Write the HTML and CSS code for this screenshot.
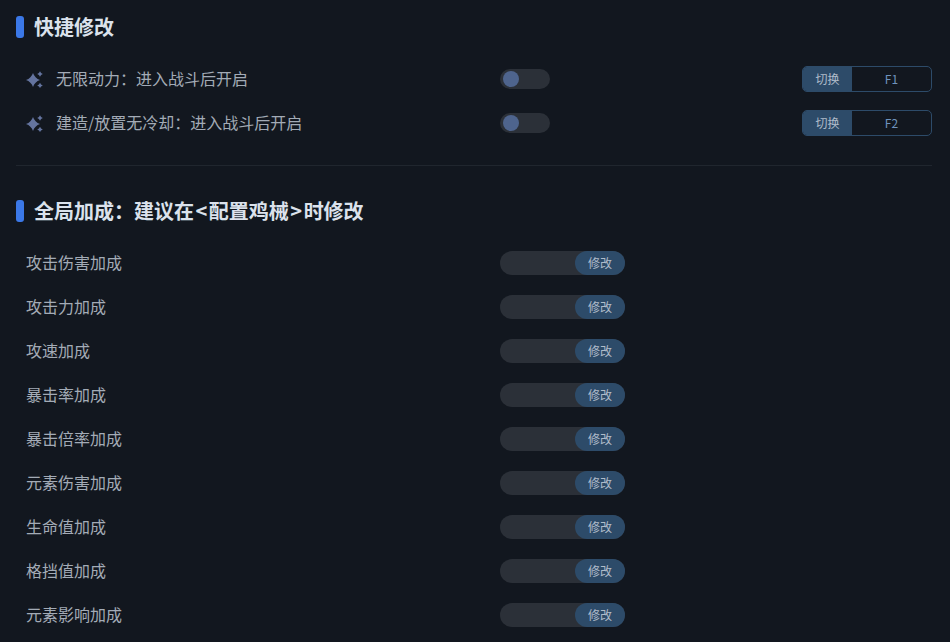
FILE: index.html
```html
<!DOCTYPE html>
<html lang="zh-CN">
<head>
    <meta charset="UTF-8">
    <title>修改</title>
    <link rel="stylesheet" href="styles.css">
</head>
<body>
    <section class="quick">
        <h2 class="heading"><span>快捷修改</span></h2>
        <div class="row">
            <svg class="spark" viewBox="0 0 18 18"><path d="M7 3 Q8.8 8.2 14 10 Q8.8 11.8 7 17 Q5.2 11.8 0 10 Q5.2 8.2 7 3Z"/><path d="M14 1.2 Q14.7 3.3 16.8 4 Q14.7 4.7 14 6.8 Q13.3 4.7 11.2 4 Q13.3 3.3 14 1.2Z"/><path d="M14 12.7 Q14.7 14.8 16.8 15.5 Q14.7 16.2 14 18 Q13.3 16.2 11.2 15.5 Q13.3 14.8 14 12.7Z"/></svg>
            <span class="label">无限动力&#xFF1A;进入战斗后开启</span>
            <div class="toggle"><div class="knob"></div></div>
            <div class="hotkey"><span class="hotkey-btn">切换</span><span class="hotkey-key">F1</span></div>
        </div>
        <div class="row">
            <svg class="spark" viewBox="0 0 18 18"><path d="M7 3 Q8.8 8.2 14 10 Q8.8 11.8 7 17 Q5.2 11.8 0 10 Q5.2 8.2 7 3Z"/><path d="M14 1.2 Q14.7 3.3 16.8 4 Q14.7 4.7 14 6.8 Q13.3 4.7 11.2 4 Q13.3 3.3 14 1.2Z"/><path d="M14 12.7 Q14.7 14.8 16.8 15.5 Q14.7 16.2 14 18 Q13.3 16.2 11.2 15.5 Q13.3 14.8 14 12.7Z"/></svg>
            <span class="label">建造/放置无冷却&#xFF1A;进入战斗后开启</span>
            <div class="toggle"><div class="knob"></div></div>
            <div class="hotkey"><span class="hotkey-btn">切换</span><span class="hotkey-key">F2</span></div>
        </div>
    </section>

    <section class="global">
        <h2 class="heading"><span>全局加成&#xFF1A;建议在<span class="angle">&lt;</span>配置鸡械<span class="angle">&gt;</span>时修改</span></h2>
        <div class="stat"><span class="stat-name">攻击伤害加成</span><div class="edit"><span class="edit-btn">修改</span></div></div>
        <div class="stat"><span class="stat-name">攻击力加成</span><div class="edit"><span class="edit-btn">修改</span></div></div>
        <div class="stat"><span class="stat-name">攻速加成</span><div class="edit"><span class="edit-btn">修改</span></div></div>
        <div class="stat"><span class="stat-name">暴击率加成</span><div class="edit"><span class="edit-btn">修改</span></div></div>
        <div class="stat"><span class="stat-name">暴击倍率加成</span><div class="edit"><span class="edit-btn">修改</span></div></div>
        <div class="stat"><span class="stat-name">元素伤害加成</span><div class="edit"><span class="edit-btn">修改</span></div></div>
        <div class="stat"><span class="stat-name">生命值加成</span><div class="edit"><span class="edit-btn">修改</span></div></div>
        <div class="stat"><span class="stat-name">格挡值加成</span><div class="edit"><span class="edit-btn">修改</span></div></div>
        <div class="stat"><span class="stat-name">元素影响加成</span><div class="edit"><span class="edit-btn">修改</span></div></div>
    </section>
</body>
</html>
```

FILE: styles.css
```css
html, body {
    height: 100%;
    overflow: hidden;
}
body {
    margin: 0;
    padding: 16px 18px 0 16px;
    box-sizing: border-box;
    background-color: #12171f;
    color: #a3abb6;
    font-family: "Noto Sans CJK SC", "Liberation Sans", sans-serif;
    font-size: 16px;
}
.heading {
    display: flex;
    align-items: center;
    margin: 0;
    height: 22px;
    font-size: 20px;
    font-weight: 700;
    line-height: 22px;
    color: #dbe2ec;
}
.heading::before {
    content: "";
    width: 8px;
    height: 22px;
    margin-right: 10px;
    border-radius: 3px;
    background-color: #3b78e7;
}
.angle {
    padding: 0 1.5px;
}
.quick {
    padding-bottom: 20px;
    border-bottom: 1px solid #20262e;
}
.quick .heading {
    margin-bottom: 19px;
}
.row {
    display: flex;
    align-items: center;
    height: 44px;
    padding-left: 10px;
}
.spark {
    flex: none;
    width: 18px;
    height: 18px;
    margin-right: 12px;
    fill: #64749f;
}
.label {
    flex: none;
    width: 444px;
    padding-bottom: 2px;
}
.toggle {
    flex: none;
    box-sizing: border-box;
    width: 50px;
    height: 20px;
    padding: 2px 3px;
    border-radius: 10px;
    background-color: #2b3038;
}
.knob {
    width: 16px;
    height: 16px;
    border-radius: 50%;
    background-color: #4e648d;
}
.hotkey {
    display: flex;
    box-sizing: border-box;
    width: 130px;
    height: 26px;
    margin-left: auto;
    border: 1px solid #2d4b69;
    border-radius: 5px;
    overflow: hidden;
    font-size: 12px;
    line-height: 24px;
    text-align: center;
}
.hotkey-btn {
    width: 49px;
    background-color: #2d4b69;
    color: #b0bccb;
}
.hotkey-key {
    flex: 1;
    color: #6f93bd;
}
.global {
    padding-top: 34px;
}
.global .heading {
    margin-bottom: 19px;
}
.stat {
    display: flex;
    align-items: center;
    height: 44px;
    padding-left: 10px;
}
.stat-name {
    flex: none;
    width: 474px;
    padding-bottom: 2px;
}
.edit {
    display: flex;
    justify-content: flex-end;
    width: 125px;
    height: 24px;
    border-radius: 12px;
    background-color: #2b3038;
}
.edit-btn {
    width: 50px;
    border-radius: 12px;
    background-color: #2d4b69;
    color: #b0bccb;
    font-size: 12px;
    line-height: 24px;
    text-align: center;
}
```
